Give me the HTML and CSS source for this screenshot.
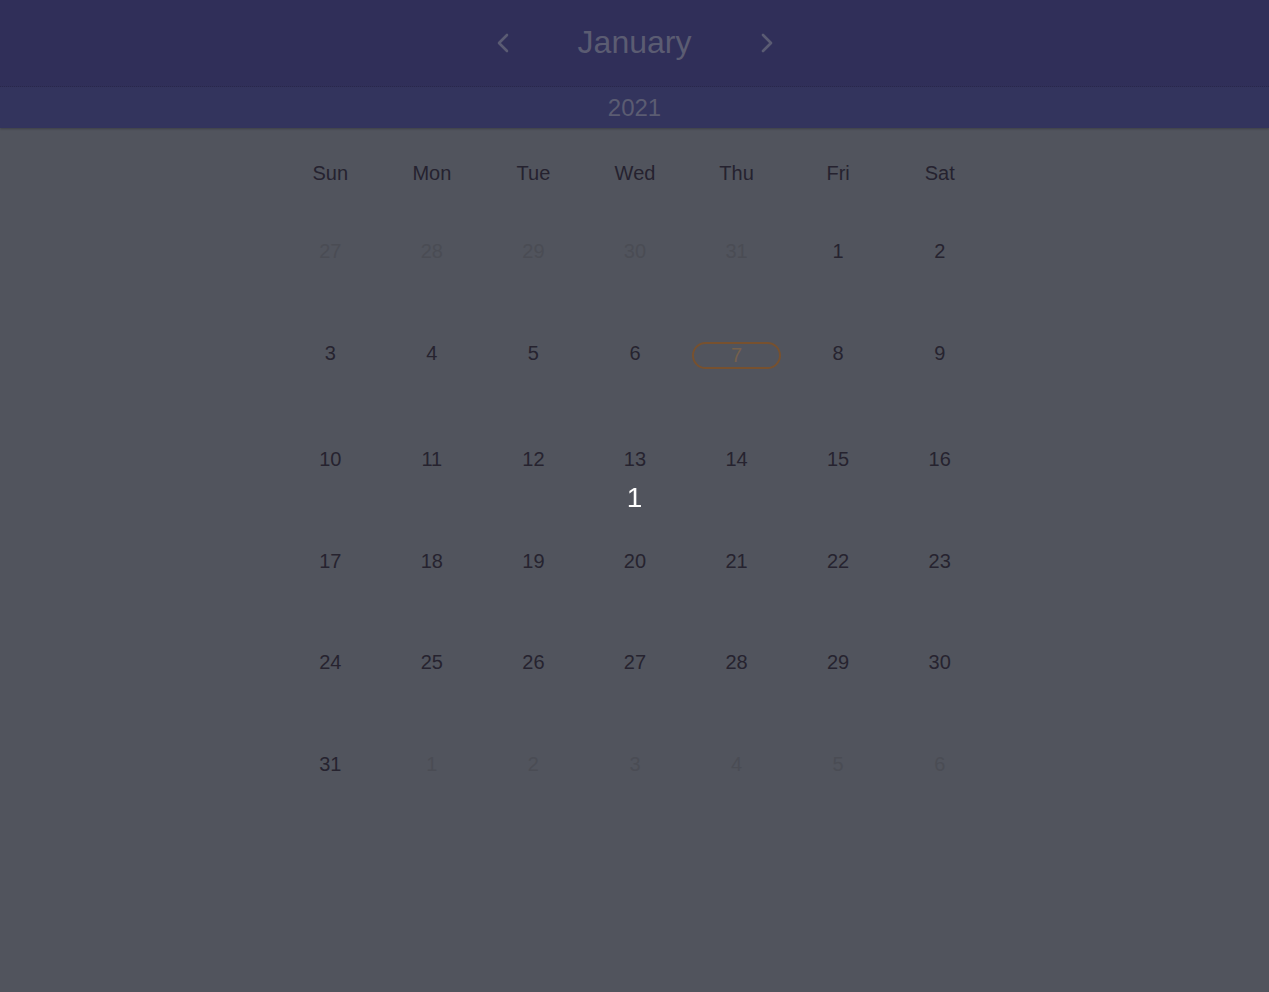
FILE: index.html
```html
<!DOCTYPE html>
<html lang="en">
<head>
<meta charset="utf-8">
<title>Calendar</title>
<link rel="stylesheet" href="styles.css">
</head>
<body>
<header class="top">
  <div class="month-bar">
    <button class="nav" aria-label="Previous month">
      <svg width="14" height="20" viewBox="0 0 14 20"><path d="M11 2 L3 10 L11 18" fill="none" stroke="currentColor" stroke-width="2.6" stroke-linecap="round" stroke-linejoin="round"/></svg>
    </button>
    <h1 class="month">January</h1>
    <button class="nav" aria-label="Next month">
      <svg width="14" height="20" viewBox="0 0 14 20"><path d="M3 2 L11 10 L3 18" fill="none" stroke="currentColor" stroke-width="2.6" stroke-linecap="round" stroke-linejoin="round"/></svg>
    </button>
  </div>
  <div class="year">2021</div>
</header>
<main class="calendar">
  <div class="grid">
    <div class="wd">Sun</div><div class="wd">Mon</div><div class="wd">Tue</div><div class="wd">Wed</div><div class="wd">Thu</div><div class="wd">Fri</div><div class="wd">Sat</div>

    <div class="day other">27</div><div class="day other">28</div><div class="day other">29</div><div class="day other">30</div><div class="day other">31</div><div class="day">1</div><div class="day">2</div>
    <div class="day">3</div><div class="day">4</div><div class="day">5</div><div class="day">6</div><div class="day today">7</div><div class="day">8</div><div class="day">9</div>
    <div class="day">10</div><div class="day">11</div><div class="day">12</div><div class="day">13</div><div class="day">14</div><div class="day">15</div><div class="day">16</div>
    <div class="day">17</div><div class="day">18</div><div class="day">19</div><div class="day">20</div><div class="day">21</div><div class="day">22</div><div class="day">23</div>
    <div class="day">24</div><div class="day">25</div><div class="day">26</div><div class="day">27</div><div class="day">28</div><div class="day">29</div><div class="day">30</div>
    <div class="day">31</div><div class="day other">1</div><div class="day other">2</div><div class="day other">3</div><div class="day other">4</div><div class="day other">5</div><div class="day other">6</div>
  </div>
</main>
<div class="overlay"><span class="counter">1</span></div>
</body>
</html>
```
FILE: styles.css
```css
html, body {
  margin: 0;
  padding: 0;
}
body {
  background: #51545d;
  font-family: "Liberation Sans", Arial, sans-serif;
  min-height: 992px;
}
.top {
  box-shadow: 0 1px 2px rgba(0, 0, 0, 0.25);
}
.month-bar {
  height: 86px;
  background: #302f59;
  border-bottom: 1px dotted #28274a;
  display: flex;
  align-items: center;
  justify-content: center;
}
.nav {
  width: 40px;
  height: 40px;
  padding: 0;
  border: none;
  background: transparent;
  color: #5a5b73;
  display: flex;
  align-items: center;
  justify-content: center;
}
.nav:first-child {
  margin-right: 55px;
}
.nav:last-child {
  margin-left: 55px;
}
.month {
  margin: 0 0 2px;
  font-size: 32px;
  font-weight: normal;
  color: #5b5c72;
  line-height: 40px;
  width: 114px;
  text-align: center;
}
.year {
  height: 41px;
  background: #33345d;
  color: #5b5c72;
  font-size: 24px;
  line-height: 42px;
  text-align: center;
}
.calendar {
  padding-top: 33px;
}
.grid {
  width: 711px;
  margin: 0 auto;
  padding-left: 1px;
  display: grid;
  grid-template-columns: repeat(7, 1fr);
  row-gap: 78.9px;
  align-items: start;
}
.wd {
  text-align: center;
  font-size: 20px;
  line-height: 23px;
  color: #25222f;
  padding-top: 1px;
  margin-bottom: -24.9px;
}
.day {
  text-align: center;
  font-size: 20px;
  line-height: 23px;
  color: #26232f;
}
.day.other {
  color: #4a4c54;
}
.day.today {
  border: 2px solid #77512f;
  border-radius: 14px;
  margin: 0 6px;
  color: #75604c;
}
.overlay {
  position: fixed;
  inset: 0;
  display: flex;
  align-items: center;
  justify-content: center;
  padding-top: 4px;
  pointer-events: none;
}
.counter {
  color: #ffffff;
  font-size: 28px;
  line-height: 32px;
}
```
